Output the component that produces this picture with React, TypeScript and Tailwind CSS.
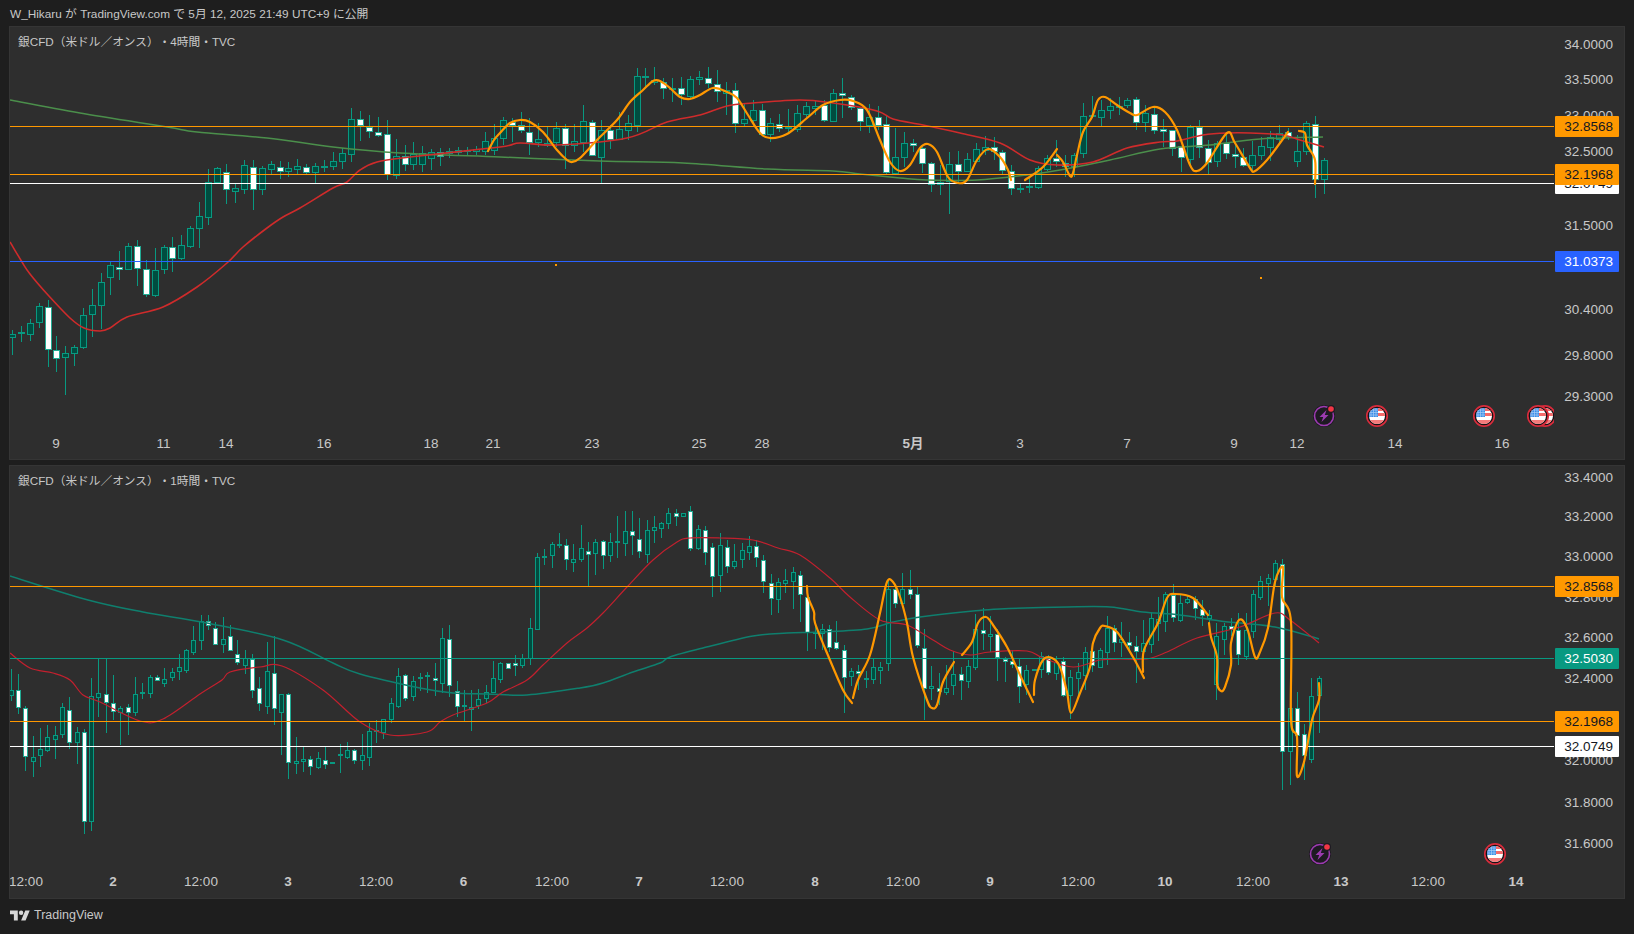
import React, { useId } from "react";

type C = [number, number, number, number, number?];
type P = [number, number];

// [high, bodyTop, bodyBottom, low, white]
const top: C[] = [
[330,334,337,355],[326,332,333,342],[319,323,334,341],[303,306,322,328],[300,307,349,367,1],[336,350,358,372,1],[346,353,357,395],[345,347,353,366],[308,315,347,349],[289,305,314,337],
[273,282,305,329],[262,265,277,295],[251,267,269,280,1],[243,246,269,270],[240,246,268,286,1],[260,269,294,297,1],[248,270,295,297],[245,247,269,274],[237,247,258,272,1],[235,245,258,260],
[226,228,246,248],[202,216,228,248],[169,182,217,225],[167,168,182,183],[164,172,189,204,1],[184,188,191,203],[160,165,189,194],[160,167,189,210,1],[166,168,189,195],[161,164,169,174],
[161,167,171,179,1],[162,168,171,177],[159,166,169,174],[164,167,172,175,1],[163,166,172,183],[160,166,167,172],[152,161,166,170],[148,153,161,169],[108,119,154,162],[111,119,125,141,1],
[115,127,131,138,1],[117,132,135,137,1],[120,134,174,180,1],[139,156,175,179],[145,156,164,171,1],[142,154,164,170],[146,153,164,172],[149,152,158,170],[148,152,156,166,1],[148,151,153,158],
[147,150,152,156],[147,150,151,155],[146,149,151,155],[132,141,151,155],[124,138,150,155],[117,120,138,145],[118,122,125,142,1],[112,125,130,133,1],[118,132,142,155,1],[123,139,142,147],
[127,143,145,147],[122,128,142,147],[124,128,145,169,1],[124,141,145,152],[105,121,142,152],[120,122,155,156,1],[120,130,157,183],[125,130,139,149,1],[112,129,139,140],[115,123,130,140],
[68,76,125,132],[68,76,77,88],[67,80,82,85],[78,82,88,99,1],[78,88,89,102],[77,88,94,105,1],[76,79,96,98],[71,77,79,85],[67,78,83,88,1],[70,84,91,102,1],
[82,90,93,115],[83,90,123,133,1],[104,119,123,126],[100,110,120,124],[104,110,134,135,1],[118,123,134,142],[114,124,128,132,1],[109,127,128,132],[105,113,129,132],[102,106,114,118],
[101,106,108,115],[100,105,120,122,1],[89,93,121,122],[78,93,95,118,1],[95,97,107,110,1],[107,108,121,131,1],[104,117,125,133],[106,117,125,130,1],[116,124,172,174,1],[128,157,173,175],
[132,143,157,167],[139,143,145,152,1],[145,148,163,173,1],[162,163,184,192,1],[165,182,184,195],[152,164,181,214],[151,164,171,184,1],[153,159,171,172],[143,149,161,162],[136,147,150,155],
[137,147,151,160,1],[150,152,170,175,1],[165,171,188,195,1],[184,188,189,193],[176,186,187,193],[166,168,187,189],[155,158,169,171],[140,158,161,167,1],[155,163,166,177,1],[153,155,166,177],
[103,116,153,158],[96,115,116,118],[100,110,117,126],[98,106,110,119],[97,106,107,115],[98,100,105,108],[97,99,122,130,1],[105,113,122,132],[108,114,130,134,1],[119,129,131,147,1],
[130,130,148,156,1],[146,146,157,172,1],[125,127,159,165],[120,127,147,158,1],[140,148,162,174,1],[141,143,161,167],[135,143,153,159,1],[145,154,156,168,1],[148,157,165,167,1],[141,155,165,170],
[137,146,155,160],[131,137,147,161],[125,133,139,145],[128,132,136,140,1],[135,151,161,167],[121,123,151,155],[116,124,179,198,1],[158,160,179,194]];

const bottom: C[] = [
[669,690,695,701],[674,690,707,714,1],[706,708,756,771,1],[736,757,761,777],[728,749,755,767],[725,737,750,752],[726,735,739,759],[703,707,734,738],[697,710,742,749,1],[727,732,742,764],
[729,732,821,834,1],[678,696,821,831],[658,693,697,717],[658,694,702,733,1],[675,703,711,720,1],[706,708,712,745],[704,707,712,735,1],[677,694,712,716],[683,692,693,699],[675,677,693,698],
[675,677,680,680,1],[668,679,683,687],[668,672,677,681],[654,667,671,680],[649,650,670,673],[626,640,652,655],[615,621,640,650],[615,621,625,630,1],[622,628,644,645,1],[617,639,644,653],
[625,636,650,650,1],[640,654,662,665,1],[650,658,665,674],[654,659,690,698,1],[677,688,703,711,1],[642,671,706,714],[636,673,708,725,1],[694,694,712,755],[693,694,762,779,1],[737,761,763,774],
[747,759,761,772],[756,759,766,775,1],[752,758,767,769],[747,760,764,769,1],[762,762,763,763],[744,754,755,773],[742,750,757,759],[749,750,760,764,1],[734,755,760,770],[723,731,757,766],
[720,730,731,743],[720,719,732,739],[698,703,719,723],[668,676,706,708],[674,675,698,701,1],[676,681,696,701],[673,677,678,691],[672,675,676,693],[663,678,680,696,1],[628,638,683,693],
[625,639,685,697,1],[681,691,706,717,1],[690,705,706,721],[690,707,709,731],[689,699,705,709],[685,692,698,703],[661,678,692,693],[662,663,679,683],[663,663,668,668,1],[655,663,665,676,1],
[654,658,665,668],[618,628,658,665],[553,557,629,630],[549,556,557,565],[542,544,555,568],[533,544,545,548],[539,545,559,570,1],[544,559,562,572],[525,548,559,562],[542,551,554,586,1],
[539,542,553,575],[540,541,555,569,1],[533,542,555,562],[516,541,542,558],[511,531,543,556],[511,531,535,555,1],[518,539,551,558,1],[520,530,554,563],[516,527,530,543],[522,523,528,538],
[508,513,523,529],[509,513,516,526,1],[513,513,516,516],[506,511,548,551,1],[525,529,548,550],[526,530,552,565,1],[543,547,576,597,1],[533,545,575,592],[540,547,566,573,1],[544,561,566,569],
[543,550,559,568],[536,546,552,560],[540,546,557,567,1],[555,560,581,593,1],[574,583,598,615,1],[578,582,599,613],[569,580,583,593],[567,572,581,609],[571,575,594,622,1],[592,597,632,651,1],
[622,632,633,649],[624,629,633,650],[625,629,647,652,1],[621,642,648,650,1],[645,650,677,713,1],[668,671,676,686],[665,671,673,690,1],[671,678,679,688],[659,667,679,684],[662,667,670,684],
[580,589,663,671],[584,589,603,608,1],[573,589,603,603],[570,589,594,599,1],[587,594,645,648,1],[629,648,688,720,1],[666,686,688,700],[673,688,691,705,1],[665,688,692,695],[651,674,685,695],
[667,674,680,700,1],[660,666,681,688],[614,629,667,670],[608,630,633,650,1],[616,634,636,652],[629,634,657,681,1],[657,659,661,682,1],[650,661,664,668,1],[659,666,686,703,1],[665,670,684,695],
[669,669,670,670],[652,656,669,678],[655,658,672,675,1],[656,662,673,680],[657,661,695,697,1],[670,677,695,719],[663,672,678,695],[647,652,675,690],[651,651,665,672,1],[648,650,667,668],
[616,628,652,665],[625,628,642,652,1],[622,639,642,657],[632,642,645,653,1],[636,646,651,683,1],[620,643,651,667],[612,618,644,653],[597,619,623,641],[592,594,621,632],[584,595,617,622,1],
[595,603,620,622],[596,599,602,604],[596,599,608,620,1],[600,609,615,626,1],[610,615,618,625],[623,636,684,700],[623,626,639,655],[618,626,629,636,1],[613,630,654,665,1],[613,630,656,660],
[590,594,631,638],[576,581,597,600],[574,578,583,606],[560,563,579,586],[559,564,751,790,1],[700,708,751,785],[692,708,735,757,1],[724,734,755,780,1],[678,696,759,763],[676,678,695,733]];

const topGreen: P[] = [[10,100],[80,113],[167,127],[197,132],[267,138],[333,147],[400,153],[500,157],[600,161],[683,163],[767,169],[833,171],[860,174],[900,178],[927,180],[977,180],[1027,175],[1060,170],[1110,160],[1160,149],[1210,145],[1260,139],[1323,137]];
const topRed: P[] = [[10,242],[22,262],[30,274],[48,295],[70,318],[84,328],[100,331],[110,328],[127,317],[163,307],[197,287],[227,263],[243,247],[267,228],[283,217],[300,208],[333,188],[347,182],[360,170],[377,162],[410,157],[500,147],[520,143],[557,145],[627,138],[667,122],[700,115],[727,106],[753,103],[800,100],[833,103],[877,111],[893,119],[923,125],[960,133],[1000,143],[1030,160],[1057,165],[1093,162],[1127,148],[1160,142],[1177,141],[1203,135],[1227,133],[1250,133],[1283,135],[1300,140],[1324,147]];
const topOrange: P[][] = [
[[488,151],[494,140],[500,133],[510,123],[520,120],[530,122],[543,132],[557,150],[567,160],[572,162],[580,158],[597,140],[617,120],[630,102],[643,90],[653,81],[660,81],[670,88],[680,97],[690,99],[700,95],[713,88],[727,92],[737,98],[748,115],[760,133],[770,138],[787,134],[807,118],[823,105],[840,100],[853,101],[867,110],[880,140],[890,162],[900,171],[910,165],[920,148],[928,144],[937,152],[948,177],[958,183],[967,180],[977,160],[988,149],[1000,157],[1008,170],[1011,180]],
[[1025,180],[1043,167],[1057,149]],
[[1057,155],[1063,162],[1070,176],[1073,173],[1077,155],[1083,132],[1092,117],[1098,100],[1105,97],[1117,105],[1130,113],[1137,115],[1153,107],[1165,112],[1177,130],[1190,165],[1197,171],[1207,163],[1227,133],[1235,143],[1250,168],[1255,171],[1267,160],[1280,143],[1288,132]],
[[1299,131],[1305,133],[1307,145],[1315,160],[1315,184]]];

const botRed: P[] = [[10,653],[30,668],[53,673],[70,680],[83,695],[100,702],[140,721],[163,719],[200,694],[222,680],[230,672],[260,667],[282,666],[323,690],[360,722],[390,735],[427,732],[440,722],[453,715],[487,703],[503,692],[527,680],[543,665],[567,643],[587,628],[603,613],[627,587],[653,560],[677,542],[690,538],[720,538],[753,540],[778,548],[800,555],[830,578],[850,597],[880,620],[907,625],[933,640],[950,650],[970,655],[990,652],[1027,651],[1043,658],[1073,667],[1100,660],[1120,659],[1147,659],[1167,652],[1197,638],[1240,627],[1275,613],[1290,620],[1319,643]];
const botTeal: P[] = [[10,576],[88,600],[143,612],[207,623],[283,640],[333,663],[360,674],[420,688],[453,693],[487,694],[527,695],[580,688],[603,683],[633,672],[660,663],[670,657],[703,648],[753,636],[787,633],[820,632],[867,629],[893,622],[920,617],[973,611],[1000,609],[1067,607],[1110,607],[1143,612],[1180,615],[1220,621],[1275,627],[1319,639]];
const botOrange: P[][] = [
[[807,586],[808,597],[814,612],[815,623],[827,653],[843,690],[852,703]],
[[853,698],[858,680],[870,655],[880,613],[887,582],[893,582],[900,597],[907,623],[913,657],[927,700],[932,708],[937,705],[943,682],[954,662]],
[[962,655],[972,642],[978,623],[986,617],[993,625],[1007,647],[1020,675],[1033,702]],
[[1034,695],[1035,680],[1043,660],[1052,658],[1060,667],[1067,692],[1071,713],[1080,693],[1090,667],[1093,643],[1100,628],[1105,626],[1117,632],[1133,657],[1144,678]],
[[1143,672],[1144,650],[1158,623],[1167,598],[1175,594],[1193,598],[1208,615]],
[[1209,623],[1211,637],[1217,657],[1217,683],[1221,691],[1225,687],[1231,665],[1231,643],[1239,620],[1247,628],[1255,657],[1260,652],[1268,628],[1275,582],[1283,567],[1282,597],[1291,622],[1291,720],[1297,737],[1297,776],[1304,762],[1312,720],[1319,700],[1319,683]]];

function smooth(p: P[]): string {
  let d = `M${p[0][0]} ${p[0][1]}`;
  for (let i = 0; i < p.length - 1; i++) {
    const a = p[Math.max(0, i - 1)], b = p[i], c = p[i + 1], e = p[Math.min(p.length - 1, i + 2)];
    const k = 6;
    d += `C${(b[0] + (c[0] - a[0]) / k).toFixed(1)} ${(b[1] + (c[1] - a[1]) / k).toFixed(1)} ${(c[0] - (e[0] - b[0]) / k).toFixed(1)} ${(c[1] - (e[1] - b[1]) / k).toFixed(1)} ${c[0]} ${c[1]}`;
  }
  return d;
}

function Candles({ data, x0, pitch, half }: { data: C[]; x0: number; pitch: number; half: number }) {
  return (
    <g shapeRendering="crispEdges">
      {data.map((c, i) => {
        const X = Math.floor(x0 + pitch * i) + 0.5;
        return (
          <g key={i}>
            <line x1={X} x2={X} y1={c[0]} y2={c[3]} stroke="#089981" />
            <rect x={X - half} y={c[1] + 0.5} width={half * 2} height={Math.max(1, c[2] - c[1])} fill={c[4] ? "#ffffff" : "#004d40"} stroke={c[4] ? "#22ab94" : "#089981"} />
          </g>
        );
      })}
    </g>
  );
}

function Bolt({ x, y }: { x: number; y: number }) {
  return (
    <g transform={`translate(${x} ${y})`}>
      <circle r="11" fill="#1e1a22" />
      <circle r="9.5" fill="none" stroke="#9c3bb0" strokeWidth="1.6" />
      <path d="M2.5 -6 L-4.5 1 L-0.8 1 L-2.5 6 L4.5 -1 L0.8 -1 Z" fill="#9c3bb0" />
      <circle cx="7" cy="-7" r="4" fill="#1e1a22" />
      <circle cx="7" cy="-7" r="2.8" fill="#f23645" />
    </g>
  );
}

function Flag({ x, y, id }: { x: number; y: number; id: string }) {
  return (
    <g transform={`translate(${x} ${y})`}>
      <clipPath id={id}><circle r="8" /></clipPath>
      <circle r="10.2" fill="#131316" stroke="#d92c3c" strokeWidth="1.7" />
      <g clipPath={`url(#${id})`}>
        <rect x="-9" y="-9" width="18" height="18" fill="#ffffff" />
        <rect x="-9" y="-9" width="18" height="4" fill="#f46a6a" />
        <rect x="-9" y="-3" width="18" height="3" fill="#f46a6a" />
        <rect x="-9" y="4" width="18" height="6" fill="#f47a7a" />
        <rect x="-9" y="-9" width="10" height="10" fill="#3a8ee6" />
        <path d="M-6 -9V1M-3.5 -9V1M-1 -9V1M-9 -6H1M-9 -3.5H1M-9 -1H1" stroke="#a8cdf5" strokeWidth="0.7" />
      </g>
    </g>
  );
}

const mono = "font-['Liberation_Sans','Noto_Sans_CJK_JP',sans-serif]";

type Box = { v: string; y: number; bg: string; fg: string };
type Panel = {
  top: number; plotH: number; title: string; pitch: number; x0: number; half: number; data: C[];
  lines: { y: number; c: string }[];
  ma: { d: P[]; c: string; w: number }[]; orange: P[][];
  ticks: [string, number][]; boxes: Box[]; time: [string, number, boolean?][];
  bolts: P[]; flags: P[]; dots?: P[];
};

function Chart({ p }: { p: Panel }) {
  const id = useId();
  return (
    <section className="relative flex h-[434px] border border-[#353535] bg-[#2e2e2e]">
      <div className="flex w-[1544px] flex-col">
        <div className="relative">
          <svg width="1544" height={p.plotH} viewBox={`10 ${p.top + 1} 1544 ${p.plotH}`} className="block">
            <Candles data={p.data} x0={p.x0} pitch={p.pitch} half={p.half} />
            {p.ma.map((m, i) => <path key={i} d={smooth(m.d)} fill="none" stroke={m.c} strokeWidth={m.w} />)}
            <g shapeRendering="crispEdges">
              {p.lines.map((l, i) => <line key={i} x1="10" x2="1554" y1={l.y} y2={l.y} stroke={l.c} />)}
            </g>
            {p.orange.map((s, i) => <path key={i} d={smooth(s)} fill="none" stroke="#ff9800" strokeWidth="2.2" strokeLinecap="round" strokeLinejoin="round" />)}
            {p.dots?.map((d, i) => <rect key={i} x={d[0]} y={d[1]} width="2" height="2" fill="#ff9800" />)}
            {p.bolts.map((b, i) => <Bolt key={i} x={b[0]} y={b[1]} />)}
            {p.flags.map((f, i) => <Flag key={i} x={f[0]} y={f[1]} id={`${id}-${i}`} />)}
          </svg>
          <div className={`absolute left-[8px] top-[6px] text-[11.7px] leading-[18px] text-[#c8c8c8] [text-spacing-trim:space-all] ${mono}`}>{p.title}</div>
        </div>
        <div className={`relative flex-1 overflow-hidden text-[13.5px] text-[#c8c8c8] ${mono}`}>
          {p.time.map(([t, x, b], i) => (
            <span key={i} className={`absolute top-[3px] -translate-x-1/2 whitespace-nowrap leading-[20px] ${b ? "font-bold" : ""}`} style={{ left: x - 10 }}>{t}</span>
          ))}
        </div>
      </div>
      <div className={`relative flex-1 overflow-hidden text-[13.5px] ${mono}`}>
        {p.ticks.map(([t, y], i) => (
          <span key={i} className="absolute right-[11px] leading-[20px] text-[#c8c8c8]" style={{ top: y - p.top - 11 }}>{t}</span>
        ))}
        {p.boxes.map((b, i) => (
          <div key={i} className="absolute left-[1px] flex h-[21px] w-[64px] items-center justify-end rounded-[1px] pr-[6px] leading-none" style={{ top: b.y - p.top - 1, background: b.bg, color: b.fg }}>{b.v}</div>
        ))}
      </div>
    </section>
  );
}

const OR = "#ff9800";
const panels: Panel[] = [
  {
    top: 26, plotH: 404, title: "銀CFD（米ドル／オンス）・4時間・TVC", pitch: 8.925, x0: 12.3, half: 3, data: top,
    lines: [{ y: 126.5, c: OR }, { y: 174.5, c: OR }, { y: 183.5, c: "#ffffff" }, { y: 261.5, c: "#2962ff" }],
    ma: [{ d: topGreen, c: "#4b8f4b", w: 1.5 }, { d: topRed, c: "#cf2b2b", w: 1.6 }], orange: topOrange,
    ticks: [["34.0000", 45], ["33.5000", 80], ["33.0000", 116], ["32.5000", 152], ["31.5000", 226], ["30.4000", 309.5], ["29.8000", 356], ["29.3000", 397]],
    boxes: [
      { v: "32.0749", y: 173, bg: "#ffffff", fg: "#131722" }, { v: "32.8568", y: 116, bg: OR, fg: "#131722" },
      { v: "32.1968", y: 164, bg: OR, fg: "#131722" }, { v: "31.0373", y: 251, bg: "#2962ff", fg: "#ffffff" }],
    time: [["9", 56], ["11", 163.6], ["14", 226], ["16", 324], ["18", 431], ["21", 493], ["23", 592], ["25", 699], ["28", 762], ["5月", 913, true], ["3", 1020], ["7", 1127], ["9", 1234], ["12", 1297], ["14", 1395], ["16", 1502]],
    bolts: [[1324, 416]], flags: [[1545, 416], [1377, 416], [1484, 416], [1538, 416]], dots: [[555, 264], [1260, 277]],
  },
  {
    top: 465, plotH: 403, title: "銀CFD（米ドル／オンス）・1時間・TVC", pitch: 7.307, x0: 11.3, half: 2, data: bottom,
    lines: [{ y: 586.5, c: OR }, { y: 658.5, c: "#089981" }, { y: 721.5, c: OR }, { y: 746.5, c: "#ffffff" }],
    ma: [{ d: botTeal, c: "#0f7f6e", w: 1.5 }, { d: botRed, c: "#c2202e", w: 1.2 }], orange: botOrange,
    ticks: [["33.4000", 478], ["33.2000", 517], ["33.0000", 557], ["32.8000", 598], ["32.6000", 638], ["32.4000", 679], ["32.0000", 761], ["31.8000", 803], ["31.6000", 844]],
    boxes: [
      { v: "32.8568", y: 576, bg: OR, fg: "#131722" }, { v: "32.5030", y: 648, bg: "#089981", fg: "#ffffff" },
      { v: "32.1968", y: 711, bg: OR, fg: "#131722" }, { v: "32.0749", y: 736, bg: "#ffffff", fg: "#131722" }],
    time: [["12:00", 26], ["2", 113, true], ["12:00", 201], ["3", 288, true], ["12:00", 376], ["6", 463.6, true], ["12:00", 552], ["7", 639, true], ["12:00", 727], ["8", 815, true], ["12:00", 903], ["9", 990, true], ["12:00", 1078], ["10", 1165, true], ["12:00", 1253], ["13", 1341, true], ["12:00", 1428], ["14", 1516, true]],
    bolts: [[1320, 854]], flags: [[1495, 854]],
  },
];

export default function App() {
  return (
    <div className={`flex h-[934px] w-[1634px] flex-col overflow-hidden bg-[#1e1e1e] ${mono}`}>
      <header className="flex h-[26px] items-center pl-[10px] pt-[3px] text-[11.8px] text-[#c8c8c8]">
        W_Hikaru が TradingView.com で 5月 12, 2025 21:49 UTC+9 に公開
      </header>
      <main className="flex flex-col gap-[5px] pl-[9px] pr-[9px]">
        {panels.map((p, i) => <Chart key={i} p={p} />)}
      </main>
      <footer className="flex flex-1 items-center gap-[4px] pb-[2px] pl-[10px] text-[#c8c8c8]">
        <svg width="20" height="16" viewBox="0 0 36 28" fill="#d8d8d8">
          <path d="M14 22H7V11H0V4h14v18zM28 22h-8l7.5-18h8L28 22z" />
          <circle cx="20" cy="8" r="4" />
        </svg>
        <span className="text-[12.5px]">TradingView</span>
      </footer>
    </div>
  );
}
